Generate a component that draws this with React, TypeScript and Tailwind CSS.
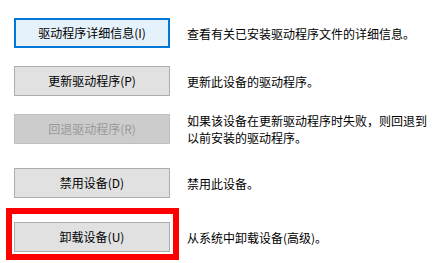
const font = { fontFamily: '"Microsoft YaHei", "Noto Sans CJK SC", "Noto Sans", sans-serif' };

type Row = {
  label: string;
  desc: string[];
  kind?: "default" | "disabled";
  mt: string;
  marked?: boolean;
};

const rows: Row[] = [
  { label: "驱动程序详细信息(I)", desc: ["查看有关已安装驱动程序文件的详细信息。"], kind: "default", mt: "mt-0" },
  { label: "更新驱动程序(P)", desc: ["更新此设备的驱动程序。"], mt: "mt-[18px]" },
  {
    label: "回退驱动程序(R)",
    desc: ["如果该设备在更新驱动程序时失败，则回退到", "以前安装的驱动程序。"],
    kind: "disabled",
    mt: "mt-[16px]",
  },
  { label: "禁用设备(D)", desc: ["禁用此设备。"], mt: "mt-[22px]" },
  { label: "卸载设备(U)", desc: ["从系统中卸载设备(高级)。"], mt: "mt-[24px]", marked: true },
];

function ActionButton({ row }: { row: Row }) {
  let cls = "border border-[#adadad] bg-[#e1e1e1] text-black";
  if (row.kind === "default") cls = "border-2 border-[#0078d7] bg-[#e5f1fb] text-black";
  if (row.kind === "disabled") cls = "border border-[#bfbfbf] bg-[#cccccc] text-[#9a9a9a]";

  return (
    <div className="relative">
      <button
        className={`flex h-[30px] w-[156px] items-center justify-center text-[12px] leading-none ${cls}`}
        style={font}
      >
        {row.label}
      </button>
      {row.marked && (
        <span className="pointer-events-none absolute -top-[14px] -bottom-[8px] -left-[8px] -right-[9px] border-[6px] border-[#ff0000]" />
      )}
    </div>
  );
}

export default function App() {
  return (
    <div className="h-[263px] w-[443px] overflow-hidden bg-white pt-[18px] pl-[14px]" style={font}>
      {rows.map((row) => (
        <div key={row.label} className={`flex items-center gap-[17px] ${row.mt}`}>
          <ActionButton row={row} />
          <div className="text-[12px] leading-[17px] text-black">
            {row.desc.map((line) => (
              <div key={line}>{line}</div>
            ))}
          </div>
        </div>
      ))}
    </div>
  );
}
